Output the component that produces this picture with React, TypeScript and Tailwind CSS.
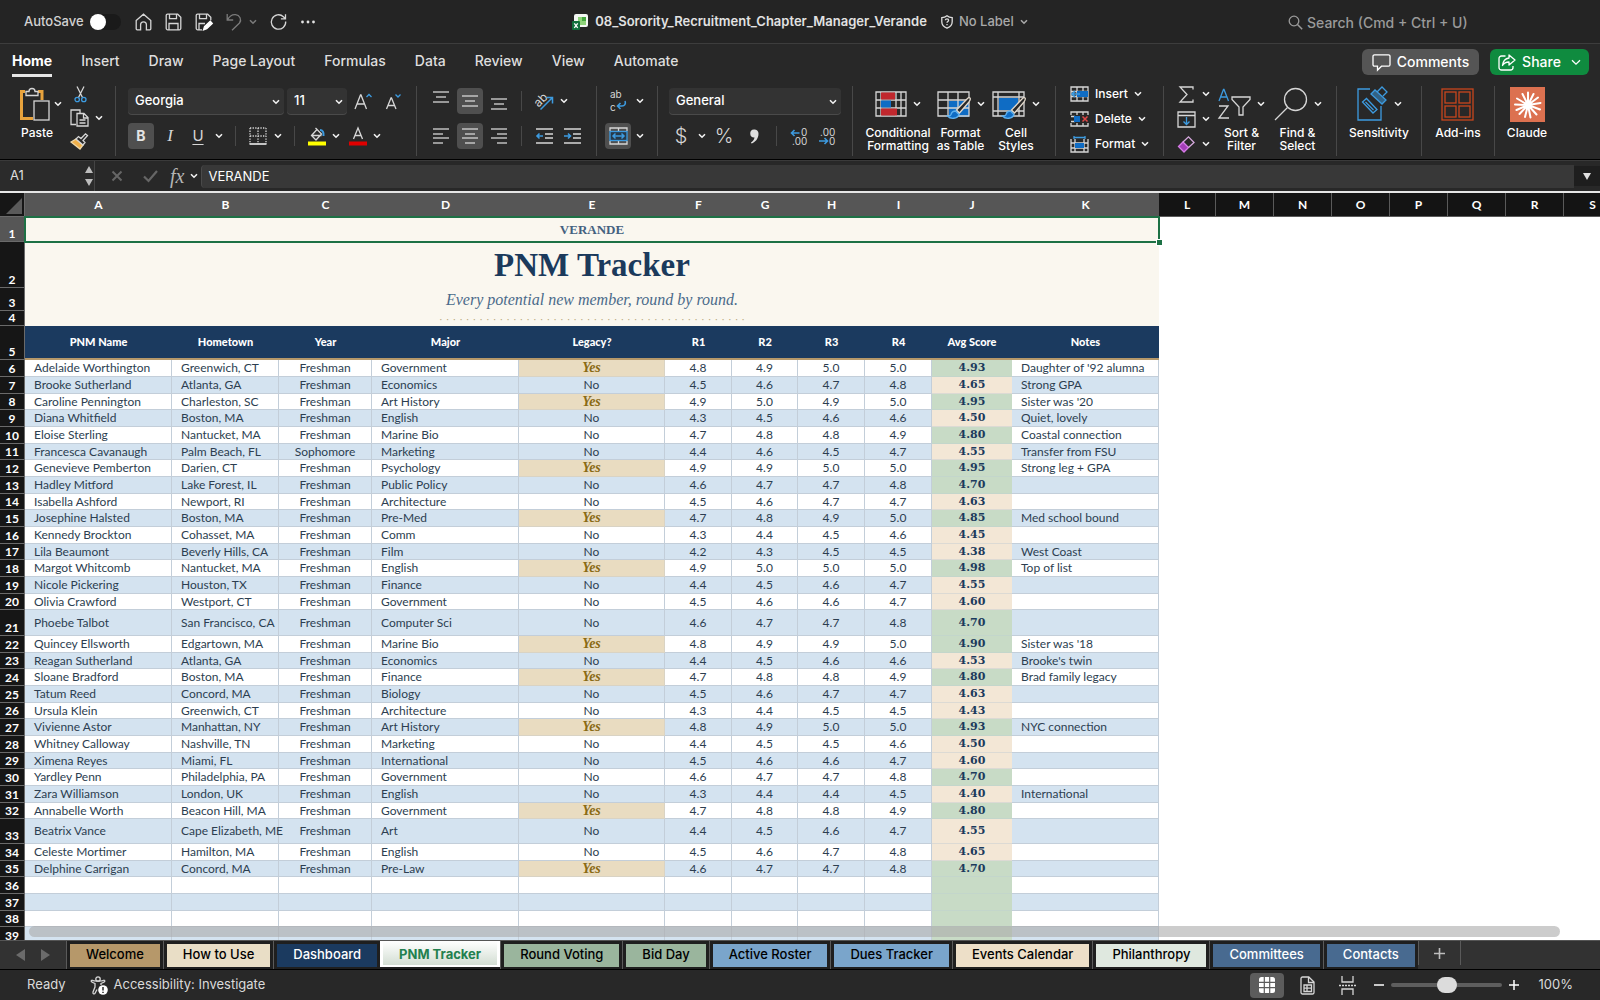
import type { ReactNode } from 'react';
import clsx from 'clsx';

type Member = [string, string, string, string, boolean, string, string, string, string, string, string];

const members: Member[] = [
  ['Adelaide Worthington', 'Greenwich, CT', 'Freshman', 'Government', true, '4.8', '4.9', '5.0', '5.0', '4.93', "Daughter of '92 alumna"],
  ['Brooke Sutherland', 'Atlanta, GA', 'Freshman', 'Economics', false, '4.5', '4.6', '4.7', '4.8', '4.65', 'Strong GPA'],
  ['Caroline Pennington', 'Charleston, SC', 'Freshman', 'Art History', true, '4.9', '5.0', '4.9', '5.0', '4.95', "Sister was '20"],
  ['Diana Whitfield', 'Boston, MA', 'Freshman', 'English', false, '4.3', '4.5', '4.6', '4.6', '4.50', 'Quiet, lovely'],
  ['Eloise Sterling', 'Nantucket, MA', 'Freshman', 'Marine Bio', false, '4.7', '4.8', '4.8', '4.9', '4.80', 'Coastal connection'],
  ['Francesca Cavanaugh', 'Palm Beach, FL', 'Sophomore', 'Marketing', false, '4.4', '4.6', '4.5', '4.7', '4.55', 'Transfer from FSU'],
  ['Genevieve Pemberton', 'Darien, CT', 'Freshman', 'Psychology', true, '4.9', '4.9', '5.0', '5.0', '4.95', 'Strong leg + GPA'],
  ['Hadley Mitford', 'Lake Forest, IL', 'Freshman', 'Public Policy', false, '4.6', '4.7', '4.7', '4.8', '4.70', ''],
  ['Isabella Ashford', 'Newport, RI', 'Freshman', 'Architecture', false, '4.5', '4.6', '4.7', '4.7', '4.63', ''],
  ['Josephine Halsted', 'Boston, MA', 'Freshman', 'Pre-Med', true, '4.7', '4.8', '4.9', '5.0', '4.85', 'Med school bound'],
  ['Kennedy Brockton', 'Cohasset, MA', 'Freshman', 'Comm', false, '4.3', '4.4', '4.5', '4.6', '4.45', ''],
  ['Lila Beaumont', 'Beverly Hills, CA', 'Freshman', 'Film', false, '4.2', '4.3', '4.5', '4.5', '4.38', 'West Coast'],
  ['Margot Whitcomb', 'Nantucket, MA', 'Freshman', 'English', true, '4.9', '5.0', '5.0', '5.0', '4.98', 'Top of list'],
  ['Nicole Pickering', 'Houston, TX', 'Freshman', 'Finance', false, '4.4', '4.5', '4.6', '4.7', '4.55', ''],
  ['Olivia Crawford', 'Westport, CT', 'Freshman', 'Government', false, '4.5', '4.6', '4.6', '4.7', '4.60', ''],
  ['Phoebe Talbot', 'San Francisco, CA', 'Freshman', 'Computer Sci', false, '4.6', '4.7', '4.7', '4.8', '4.70', ''],
  ['Quincey Ellsworth', 'Edgartown, MA', 'Freshman', 'Marine Bio', true, '4.8', '4.9', '4.9', '5.0', '4.90', "Sister was '18"],
  ['Reagan Sutherland', 'Atlanta, GA', 'Freshman', 'Economics', false, '4.4', '4.5', '4.6', '4.6', '4.53', "Brooke's twin"],
  ['Sloane Bradford', 'Boston, MA', 'Freshman', 'Finance', true, '4.7', '4.8', '4.8', '4.9', '4.80', 'Brad family legacy'],
  ['Tatum Reed', 'Concord, MA', 'Freshman', 'Biology', false, '4.5', '4.6', '4.7', '4.7', '4.63', ''],
  ['Ursula Klein', 'Greenwich, CT', 'Freshman', 'Architecture', false, '4.3', '4.4', '4.5', '4.5', '4.43', ''],
  ['Vivienne Astor', 'Manhattan, NY', 'Freshman', 'Art History', true, '4.8', '4.9', '5.0', '5.0', '4.93', 'NYC connection'],
  ['Whitney Calloway', 'Nashville, TN', 'Freshman', 'Marketing', false, '4.4', '4.5', '4.5', '4.6', '4.50', ''],
  ['Ximena Reyes', 'Miami, FL', 'Freshman', 'International', false, '4.5', '4.6', '4.6', '4.7', '4.60', ''],
  ['Yardley Penn', 'Philadelphia, PA', 'Freshman', 'Government', false, '4.6', '4.7', '4.7', '4.8', '4.70', ''],
  ['Zara Williamson', 'London, UK', 'Freshman', 'English', false, '4.3', '4.4', '4.4', '4.5', '4.40', 'International'],
  ['Annabelle Worth', 'Beacon Hill, MA', 'Freshman', 'Government', true, '4.7', '4.8', '4.8', '4.9', '4.80', ''],
  ['Beatrix Vance', 'Cape Elizabeth, ME', 'Freshman', 'Art', false, '4.4', '4.5', '4.6', '4.7', '4.55', ''],
  ['Celeste Mortimer', 'Hamilton, MA', 'Freshman', 'English', false, '4.5', '4.6', '4.7', '4.8', '4.65', ''],
  ['Delphine Carrigan', 'Concord, MA', 'Freshman', 'Pre-Law', true, '4.6', '4.7', '4.7', '4.8', '4.70', ''],
];

const columns = [
  { letter: 'A', title: 'PNM Name', width: 'w-[147px]' },
  { letter: 'B', title: 'Hometown', width: 'w-[107px]' },
  { letter: 'C', title: 'Year', width: 'w-[93px]' },
  { letter: 'D', title: 'Major', width: 'w-[147px]' },
  { letter: 'E', title: 'Legacy?', width: 'w-[146px]' },
  { letter: 'F', title: 'R1', width: 'w-[67px]' },
  { letter: 'G', title: 'R2', width: 'w-[66px]' },
  { letter: 'H', title: 'R3', width: 'w-[67px]' },
  { letter: 'I', title: 'R4', width: 'w-[67px]' },
  { letter: 'J', title: 'Avg Score', width: 'w-[80px]' },
  { letter: 'K', title: 'Notes', width: 'w-[147px]' },
];

const emptyColumns = ['L', 'M', 'N', 'O', 'P', 'Q', 'R', 'S'];

const sheets = [
  { name: 'Welcome', style: 'bg-[#b6986a] text-black' },
  { name: 'How to Use', style: 'bg-[#e9dec6] text-black' },
  { name: 'Dashboard', style: 'bg-[#1b3a5f] text-white' },
  { name: 'PNM Tracker', style: '' },
  { name: 'Round Voting', style: 'bg-[#9ab59d] text-black' },
  { name: 'Bid Day', style: 'bg-[#9ab59d] text-black' },
  { name: 'Active Roster', style: 'bg-[#7aa5cb] text-black' },
  { name: 'Dues Tracker', style: 'bg-[#7aa5cb] text-black' },
  { name: 'Events Calendar', style: 'bg-[#eddfc8] text-black' },
  { name: 'Philanthropy', style: 'bg-[#dfe8df] text-black' },
  { name: 'Committees', style: 'bg-[#486a90] text-white' },
  { name: 'Contacts', style: 'bg-[#486a90] text-white' },
];

function Svg({ w, h, children, className }: { w: number; h: number; children: ReactNode; className?: string }) {
  return (
    <svg
      width={w}
      height={h}
      viewBox={`0 0 ${w} ${h}`}
      fill="none"
      stroke="#d6d6d6"
      strokeWidth="1.3"
      className={clsx('block shrink-0 overflow-visible', className)}
      aria-hidden="true"
    >
      {children}
    </svg>
  );
}

function Chevron({ color = '#f2f2f2', className }: { color?: string; className?: string }) {
  return (
    <Svg w={8} h={6} className={className}>
      <path d="M1 1.2l3 3 3-3" stroke={color} strokeWidth="1.6" />
    </Svg>
  );
}

function IconButton({ label, className, children }: { label: string; className?: string; children: ReactNode }) {
  return (
    <button type="button" aria-label={label} className={clsx('flex h-[26px] shrink-0 items-center justify-center rounded', className)}>
      {children}
    </button>
  );
}

function Divider() {
  return <span className="h-5 w-px shrink-0 bg-[#484848]" />;
}

function Group({ className, children }: { className?: string; children: ReactNode }) {
  return <div className={clsx('flex h-[70px] shrink-0 border-r border-[#484848]', className)}>{children}</div>;
}

function BigButton({ icon, lines, chevron = true, className }: { icon: ReactNode; lines: string[]; chevron?: boolean; className?: string }) {
  return (
    <button type="button" className={clsx('flex shrink-0 flex-col items-center', className)}>
      <span className="flex h-9 items-center gap-1.5">
        {icon}
        {chevron && <Chevron />}
      </span>
      <span className="mt-1 flex flex-col items-center text-xs leading-[13px] font-medium whitespace-nowrap">
        {lines.map((line) => (
          <span key={line}>{line}</span>
        ))}
      </span>
    </button>
  );
}

function TitleBar() {
  return (
    <header className="grid h-11 shrink-0 grid-cols-[1fr_auto_1fr] items-center border-b border-[#3d3d3d] bg-[#242424]">
      <div className="flex items-center pl-6">
        <label className="flex items-center gap-1.5 text-[13px] font-medium text-[#d2d2d2]">
          AutoSave
          <input
            type="checkbox"
            className="h-4 w-[31px] appearance-none rounded-full bg-[#1a1a1a] before:block before:size-4 before:rounded-full before:bg-white"
          />
        </label>
        <div className="flex items-center gap-[13px] pl-3.5">
          <IconButton label="Home">
            <Svg w={17} h={18}>
              <path d="M1.2 7.6L8.5 1.2l7.3 6.4v8.2a1 1 0 0 1-1 1h-3.4v-5a2.9 2.9 0 0 0-5.8 0v5H2.2a1 1 0 0 1-1-1z" />
            </Svg>
          </IconButton>
          <IconButton label="Save">
            <Svg w={17} h={18}>
              <path d="M2.5 1.2h10.2l3.1 3.1v11a1.5 1.5 0 0 1-1.5 1.5H2.7a1.5 1.5 0 0 1-1.5-1.5V2.5a1.3 1.3 0 0 1 1.3-1.3zM4.5 1.2v4.5h7V1.2M4 16.8v-6.3h9v6.3" />
            </Svg>
          </IconButton>
          <IconButton label="Save As">
            <Svg w={18} h={18}>
              <path d="M7 16.8H2.7a1.5 1.5 0 0 1-1.5-1.5V2.5a1.3 1.3 0 0 1 1.3-1.3h10.2l3.1 3.1v3M4.5 1.2v4.5h7V1.2M4 16.8v-6.3h6" />
              <path d="M8.5 17l1-3.5 5.8-5.3 2 2.2-5.6 5.3z" fill="#fff" stroke="#fff" />
            </Svg>
          </IconButton>
          <IconButton label="Undo">
            <Svg w={15} h={18}>
              <path d="M1.2 1v6h6M1.4 7C3.5 3 6.5 1.3 9.5 1.6c4.3.5 6.5 5 4 8.4L6 17.2" stroke="#7b7b7b" />
            </Svg>
            <Chevron color="#7b7b7b" className="ml-2" />
          </IconButton>
          <IconButton label="Redo">
            <Svg w={17} h={18}>
              <path d="M15.7 8.5a7.2 7.2 0 1 1-2.3-4.8l1.8 1.8M15.5 1.2v4.6h-4.6" />
            </Svg>
          </IconButton>
          <IconButton label="More">
            <Svg w={16} h={4}>
              <g fill="#e3e3e3" stroke="none">
                <circle cx="2.5" cy="2" r="1.4" />
                <circle cx="8" cy="2" r="1.4" />
                <circle cx="13.5" cy="2" r="1.4" />
              </g>
            </Svg>
          </IconButton>
        </div>
      </div>
      <div className="flex items-center text-[13px]">
        <Svg w={17} h={16}>
          <g stroke="none">
            <rect x="2" y="0" width="14" height="13" rx="2" fill="#f3f7f3" />
            <rect x="6" y="3" width="8" height="8" fill="#8fd37a" />
            <rect x="10" y="3" width="4" height="4" fill="#45a83f" />
            <rect x="0" y="7" width="8" height="9" rx="1" fill="#12703c" />
          </g>
          <path d="M2.3 9.3l3.4 4.6M5.7 9.3l-3.4 4.6" stroke="#fff" />
        </Svg>
        <h1 className="pl-1.5 font-semibold text-[#e2e2e2]">08_Sorority_Recruitment_Chapter_Manager_Verande</h1>
        <button type="button" className="flex items-center gap-1.5 pl-3.5 font-medium text-[#a9a9a9]">
          <Svg w={12} h={14}>
            <path d="M6 .8c1.5 1.2 3 1.7 5.2 1.8v4.2c0 3-1.9 5.2-5.2 6.400C2.700 12 .8 9.800.8 6.800V2.600C3 2.500 4.500 2 6 .8z" stroke="#dedede" />
            <path d="M4.4 5.3c0-2 3.2-2 3.2 0 0 1.2-1.6 1.2-1.6 2.5M6 9v1.2" stroke="#dedede" />
          </Svg>
          No Label
          <Chevron color="#a9a9a9" />
        </button>
      </div>
      <label className="flex items-center justify-end gap-1 pt-0.5 pr-[117px]">
        <Svg w={15} h={15}>
          <circle cx="6" cy="6" r="4.8" stroke="#9a9a9a" />
          <path d="M9.5 9.5l4.7 4.7" stroke="#9a9a9a" strokeWidth="1.5" />
        </Svg>
        <input
          type="text"
          aria-label="Search"
          placeholder="Search (Cmd + Ctrl + U)"
          className="w-44 bg-transparent text-sm font-medium outline-none placeholder:text-[#9a9a9a]"
        />
      </label>
    </header>
  );
}

function RibbonTabs() {
  const tabs = ['Insert', 'Draw', 'Page Layout', 'Formulas', 'Data', 'Review', 'View', 'Automate'];
  return (
    <div className="flex h-9 shrink-0 items-center justify-between pr-[11px] pl-3">
      <nav className="flex gap-[29px] text-sm leading-[26px] font-medium text-[#dedede]">
        <a href="#home" className="border-b-[3px] border-[#e6e6e6] font-bold text-white">
          Home
        </a>
        {tabs.map((tab) => (
          <a key={tab} href="#ribbon">
            {tab}
          </a>
        ))}
      </nav>
      <div className="flex gap-[11px] text-sm font-medium">
        <button type="button" className="flex h-[26px] w-[117px] items-center justify-center gap-1.5 rounded-md bg-[#555] text-white">
          <Svg w={19} h={17}>
            <path d="M2.5.8h14a1.500 1.500 0 0 1 1.500 1.500v8.400a1.500 1.500 0 0 1-1.500 1.500H9.500l-4 4v-4h-3A1.500 1.500 0 0 1 1 10.700V2.300A1.500 1.500 0 0 1 2.500.8z" stroke="#fff" />
          </Svg>
          Comments
        </button>
        <button type="button" className="flex h-[26px] w-[99px] items-center justify-center gap-1.5 rounded-md bg-[#0f8b3f] text-white">
          <Svg w={18} h={17}>
            <path d="M7.5 2H3.5A2.5 2.5 0 0 0 1 4.5v9A2.5 2.5 0 0 0 3.5 16h9a2.5 2.5 0 0 0 2.5-2.5V12" stroke="#fff" />
            <path d="M11 1l6 5-6 5V8C8 8 6 9 4.5 11.5 5 7 7.5 4.5 11 4z" stroke="#fff" strokeLinejoin="round" />
          </Svg>
          Share
          <Svg w={10} h={7} className="ml-1">
            <path d="M1 1.2l4 4 4-4" stroke="#fff" />
          </Svg>
        </button>
      </div>
    </div>
  );
}

function PickList({ label, value, className }: { label: string; value: string; className: string }) {
  return (
    <div className={clsx('relative shrink-0', className)}>
      <select
        aria-label={label}
        defaultValue={value}
        className="block h-[26px] w-full appearance-none rounded bg-[#333] px-[7px] text-[13px] font-medium text-white shadow-[0_1px_0_#4a4a4a]"
      >
        <option>{value}</option>
      </select>
      <Chevron className="pointer-events-none absolute top-[11px] right-1" />
    </div>
  );
}

function Lines({ rows, h = 16 }: { rows: [number, number, number][]; h?: number }) {
  return (
    <Svg w={16} h={h}>
      {rows.map(([y, x1, x2]) => (
        <path key={y} d={`M${x1} ${y}H${x2}`} />
      ))}
    </Svg>
  );
}

function ClipboardGroup() {
  return (
    <Group className="w-[116px] pl-[18px]">
      <button type="button" className="flex flex-col items-center">
        <span className="flex h-9 items-center gap-1">
          <Svg w={32} h={34}>
            <path d="M7 4.5H3.500v27H15M20 4.500h4V13" stroke="#e8a33d" strokeWidth="3" />
            <path d="M8 8.5V4.500h3a3 3 0 0 1 6 0h3v4z" fill="#282828" />
            <rect x="16" y="14" width="15" height="19" fill="#282828" />
          </Svg>
          <Chevron />
        </span>
        <span className="mt-1 pr-1.5 text-xs leading-[13px] font-medium">Paste</span>
      </button>
      <div className="flex flex-col items-start gap-1.5 pl-2">
        <button type="button" aria-label="Cut" className="pl-1">
          <Svg w={13} h={17}>
            <path d="M3 .5l5.5 11M10 .5L4.5 11.5" />
            <circle cx="3.2" cy="13.5" r="2.2" stroke="#3d9be0" />
            <circle cx="9.8" cy="13.5" r="2.2" stroke="#3d9be0" />
          </Svg>
        </button>
        <button type="button" aria-label="Copy" className="flex items-center gap-1.5">
          <Svg w={19} h={18}>
            <path d="M6 15.5H1V1h9v3M7 4.5h7l4 4v8.5H7zM13.5 4.5v4.5H18M9.5 11h6M9.5 14h6" />
          </Svg>
          <Chevron />
        </button>
        <button type="button" aria-label="Format Painter">
          <Svg w={20} h={17}>
            <path d="M1 9l9 7 3-4-7-6z" fill="#f0b04a" stroke="#f0d9a8" />
            <path d="M6 6l7 6 2-2.5-2-2 4.5-5-2-1.7L11 5.5 8.5 3.5z" fill="#282828" />
          </Svg>
        </button>
      </div>
    </Group>
  );
}

function FontGroup() {
  return (
    <Group className="w-[301px] flex-col justify-between pt-0.5 pb-[7px] pl-3">
      <div className="flex items-center">
        <PickList label="Font" value="Georgia" className="w-[156px]" />
        <PickList label="Font size" value="11" className="ml-[3px] w-[60px]" />
        <IconButton label="Increase font size" className="ml-1 w-6">
          <Svg w={18} h={18}>
            <path d="M1 17L6.5 3h.5l5.5 14M3 12h7.5" />
            <path d="M12.5 5l2.5-2.5L17.5 5" stroke="#3d9be0" />
          </Svg>
        </IconButton>
        <IconButton label="Decrease font size" className="ml-1.5 w-6">
          <Svg w={17} h={18}>
            <path d="M1.5 17L6 6h.5L11 17M3 13.5h6.5" />
            <path d="M10.5 2.5L13 5l2.5-2.5" stroke="#3d9be0" />
          </Svg>
        </IconButton>
      </div>
      <div className="flex items-center">
        <IconButton label="Bold" className="w-[26px] bg-[#4f4f4f] text-sm font-bold text-[#e4e4e4]">
          B
        </IconButton>
        <IconButton label="Italic" className="ml-1 w-6 font-['Liberation_Serif',serif] text-[17px] text-[#d6d6d6] italic">
          I
        </IconButton>
        <IconButton label="Underline" className="ml-1 w-6 text-[15px] text-[#d6d6d6] underline underline-offset-3">
          U
        </IconButton>
        <Chevron className="mr-3 ml-[5px]" />
        <Divider />
        <IconButton label="Borders" className="ml-3 w-5">
          <Svg w={18} h={18}>
            <path d="M1 1h16M1 9h16M1 1v16M9 1v16M17 1v16" strokeDasharray="1.3 1.3" />
            <path d="M.5 17h17" strokeWidth="1.8" />
          </Svg>
        </IconButton>
        <Chevron className="mr-3 ml-1.5" />
        <Divider />
        <IconButton label="Fill color" className="ml-3 w-5">
          <Svg w={18} h={20}>
            <path d="M3.5 9.5L9 3.5l4.5 4.5-5.5 6zM9 3.5L7.5 2M3.5 9.5h10" />
            <path d="M12 4c2.5 0 4 2 3.5 6" stroke="#3d9be0" strokeWidth="2" />
            <path d="M0 17.5h18" stroke="#ff0" strokeWidth="4" />
          </Svg>
        </IconButton>
        <Chevron className="ml-[5px]" />
        <IconButton label="Font color" className="ml-2 w-5">
          <Svg w={18} h={20}>
            <path d="M4.5 13L9 2l4.5 11M6 9.5h6" />
            <path d="M0 17.5h18" stroke="#e00000" strokeWidth="4" />
          </Svg>
        </IconButton>
        <Chevron className="ml-[5px]" />
      </div>
    </Group>
  );
}

function AlignmentGroup() {
  return (
    <Group className="w-[180px] flex-col justify-between pt-0.5 pb-[7px] pl-3">
      <div className="flex items-center">
        <IconButton label="Top align" className="w-6">
          <Lines rows={[[1, 0, 16], [6, 3, 13], [11, 0, 16]]} h={20} />
        </IconButton>
        <IconButton label="Middle align" className="ml-1 w-[26px] bg-[#4f4f4f]">
          <Lines rows={[[3, 0, 16], [8, 3, 13], [13, 0, 16]]} />
        </IconButton>
        <IconButton label="Bottom align" className="ml-1 w-6">
          <Lines rows={[[8, 0, 16], [13, 3, 13], [18, 0, 16]]} h={20} />
        </IconButton>
        <span className="w-2.5" />
        <Divider />
        <IconButton label="Orientation" className="ml-3 w-5">
          <Svg w={20} h={19}>
            <text x="1" y="13" fontSize="12" fill="#d6d6d6" stroke="none" transform="rotate(-45 6 10)">
              ab
            </text>
            <path d="M6.5 17.5L18 6M12.5 5.5h6v6" stroke="#3d9be0" strokeWidth="1.5" />
          </Svg>
        </IconButton>
        <Chevron className="ml-1.5" />
      </div>
      <div className="flex items-center">
        <IconButton label="Align left" className="w-6">
          <Lines rows={[[1, 0, 16], [6, 0, 10], [10, 0, 16], [15, 0, 10]]} />
        </IconButton>
        <IconButton label="Center" className="ml-1 w-[26px] bg-[#4f4f4f]">
          <Lines rows={[[1, 0, 16], [6, 3, 13], [10, 0, 16], [15, 3, 13]]} />
        </IconButton>
        <IconButton label="Align right" className="ml-1 w-6">
          <Lines rows={[[1, 0, 16], [6, 6, 16], [10, 0, 16], [15, 6, 16]]} />
        </IconButton>
        <span className="w-2.5" />
        <Divider />
        <IconButton label="Decrease indent" className="ml-3 w-5">
          <Svg w={17} h={16}>
            <path d="M0 1h17M9 6h8M9 10h8M0 15h17" />
            <path d="M7 8H1M3.5 5.5L1 8l2.5 2.5" stroke="#3d9be0" strokeWidth="1.6" />
          </Svg>
        </IconButton>
        <IconButton label="Increase indent" className="ml-2 w-5">
          <Svg w={17} h={16}>
            <path d="M0 1h17M9 6h8M9 10h8M0 15h17" />
            <path d="M0 8h6.5M4 5.5L6.5 8 4 10.5" stroke="#3d9be0" strokeWidth="1.6" />
          </Svg>
        </IconButton>
      </div>
    </Group>
  );
}

function WrapGroup() {
  return (
    <Group className="w-[61px] flex-col justify-between pt-0.5 pb-[7px] pl-2">
      <div className="flex items-center">
        <IconButton label="Wrap text" className="w-[26px]">
          <Svg w={18} h={22}>
            <g fontSize="10" fill="#d6d6d6" stroke="none">
              <text x="1" y="8">
                ab
              </text>
              <text x="1" y="21">
                c
              </text>
            </g>
            <path d="M16 11c1.2 3-.5 5-3 5H8.5M11.5 13l-3 3 3 3" stroke="#3d9be0" strokeWidth="1.6" />
          </Svg>
        </IconButton>
        <Chevron className="ml-[5px]" />
      </div>
      <div className="flex items-center">
        <IconButton label="Merge and center" className="w-[26px] bg-[#4f4f4f]">
          <Svg w={19} h={18}>
            <path d="M1 4V1h17v3M1 14v3h17v-3M9.5 1v3M9.5 14v3" />
            <rect x="1" y="4.5" width="17" height="9" stroke="#3d9be0" fill="#263a4a" />
            <path d="M4 9h11M6.5 6.5L4 9l2.5 2.5M12.5 6.5L15 9l-2.5 2.5" stroke="#3d9be0" strokeWidth="1.5" />
          </Svg>
        </IconButton>
        <Chevron className="ml-[5px]" />
      </div>
    </Group>
  );
}

function NumberGroup() {
  return (
    <Group className="w-[195px] flex-col justify-between pt-0.5 pb-[7px] pl-[11px]">
      <PickList label="Number format" value="General" className="w-[172px]" />
      <div className="flex items-center text-[#d6d6d6]">
        <IconButton label="Currency" className="w-6 text-xl font-light">
          $
        </IconButton>
        <Chevron className="ml-[5px]" />
        <IconButton label="Percent" className="ml-1.5 w-6 text-xl font-light">
          %
        </IconButton>
        <IconButton label="Comma style" className="ml-1.5 w-6">
          <Svg w={11} h={15}>
            <path d="M5 .5a4 4 0 0 1 4.5 4.2C9.5 9.5 6.5 13 2.5 14.5l-.5-1c2-1.2 3.2-2.8 3.500-5A4 4 0 1 1 5 .5z" fill="#e0e0e0" stroke="none" />
          </Svg>
        </IconButton>
        <span className="w-2.5" />
        <Divider />
        <IconButton label="Increase decimal" className="ml-3 w-5">
          <Svg w={19} h={19}>
            <g fontSize="10" fill="#d6d6d6" stroke="none">
              <text x="11" y="9">
                0
              </text>
              <text x="2" y="18">
                .00
              </text>
            </g>
            <path d="M9.5 6H1.5M4.5 3L1.5 6l3 3" stroke="#3d9be0" strokeWidth="1.6" />
          </Svg>
        </IconButton>
        <IconButton label="Decrease decimal" className="ml-2 w-5">
          <Svg w={19} h={19}>
            <g fontSize="10" fill="#d6d6d6" stroke="none">
              <text x="2" y="9">
                .00
              </text>
              <text x="11" y="18">
                0
              </text>
            </g>
            <path d="M1 14h8M6.5 11l3 3-3 3" stroke="#3d9be0" strokeWidth="1.6" />
          </Svg>
        </IconButton>
      </div>
    </Group>
  );
}

function Brush() {
  return (
    <>
      <path d="M33 9c-1-.8-2 0-3 1L19.5 21l3 3L32 13c1-1.5 2-3 1-4z" fill="#282828" stroke="#e3d9cc" />
      <path d="M18.5 22c-3 0-4 1.5-4.5 3.5-.5 1.3-2 1.7-3.5 1.5 3 3.5 10 3 11.5-1.5z" fill="#0f6cc4" stroke="#5db0ee" />
    </>
  );
}

function StylesGroup() {
  return (
    <Group className="w-[203px] pl-[11px]">
      <BigButton
        className="w-[68px]"
        lines={['Conditional', 'Formatting']}
        icon={
          <Svg w={32} h={26}>
            <path d="M1 1h30v24H1zM1 9h30M1 17h30M6 1v24M21 1v24M26 1v24" />
            <path d="M6 1.5h14v7H6zM6 17.5h16v7H6z" fill="#c0272d" stroke="none" />
            <path d="M6 9.5h10v7H6z" fill="#0f6cc4" stroke="none" />
          </Svg>
        }
      />
      <BigButton
        className="w-[57px]"
        lines={['Format', 'as Table']}
        icon={
          <Svg w={34} h={31}>
            <path d="M12 12h20v16H12z" fill="#0f6cc4" stroke="none" />
            <path d="M1 3h31v24H1zM1 11h31M1 19h31M11 3v24M21 3v24" />
            <Brush />
          </Svg>
        }
      />
      <BigButton
        className="w-[54px]"
        lines={['Cell', 'Styles']}
        icon={
          <Svg w={34} h={31}>
            <path d="M1 3h31v24H1zM1 8h31M1 22h31M6 3v24M27 3v24" />
            <path d="M7 9h19v12H7z" fill="#0f6cc4" stroke="none" />
            <Brush />
          </Svg>
        }
      />
    </Group>
  );
}

function CellsGroup() {
  const items: [string, ReactNode][] = [
    [
      'Insert',
      <>
        <path d="M1 1h17v14H1zM1 5.5h17M1 10.5h17M7 1v14M13 1v14" />
        <path d="M7 5h11v6H7z" fill="#0f6cc4" stroke="none" />
        <path d="M10 8H2M5 5L2 8l3 3" stroke="#3d9be0" strokeWidth="1.6" />
      </>,
    ],
    [
      'Delete',
      <>
        <path d="M1 4V1h17v3M1 12v3h17v-3M7 1v3M13 1v3M7 12v3M13 12v3M1 5.5h4M1 10.5h4" />
        <path d="M4 5h6v6H4z" fill="#0f6cc4" stroke="none" />
        <path d="M12.5 5.5l5 5M17.5 5.5l-5 5" stroke="#e04848" strokeWidth="1.5" />
      </>,
    ],
    [
      'Format',
      <>
        <path d="M1 3v13h17V3M1 7h17M1 12h17M5 3v13M14 3v13" />
        <path d="M5 7h9v5H5z" fill="#0f6cc4" stroke="none" />
        <path d="M4 1.5h11M4 0v3M15 0v3" stroke="#3d9be0" />
      </>,
    ],
  ];
  return (
    <Group className="w-[108px] flex-col gap-[9px] pl-3.5">
      {items.map(([name, icon]) => (
        <button key={name} type="button" className="flex h-4 items-center gap-1.5 text-xs font-medium">
          <Svg w={19} h={17}>
            {icon}
          </Svg>
          {name}
          <Chevron />
        </button>
      ))}
    </Group>
  );
}

function EditingGroup() {
  return (
    <Group className="w-[173px] pl-[13px]">
      <div className="flex w-9 flex-col gap-[9px]">
        <button type="button" aria-label="AutoSum" className="flex h-4 items-center gap-1.5">
          <Svg w={19} h={17}>
            <path d="M16 3.5V1H3l7 7.5L3 16h13v-2.5" />
          </Svg>
          <Chevron />
        </button>
        <button type="button" aria-label="Fill" className="flex h-4 items-center gap-1.5">
          <Svg w={19} h={17}>
            <path d="M1 1h17v15H1zM1 4.5h17" />
            <path d="M9.5 6v7.5M6.5 10.5l3 3 3-3" stroke="#3d9be0" />
          </Svg>
          <Chevron />
        </button>
        <button type="button" aria-label="Clear" className="flex h-4 items-center gap-1.5">
          <Svg w={19} h={17}>
            <path d="M1.5 10.5L6 6l5.500 5.500L7 16z" fill="#a33fb8" stroke="#d77be8" />
            <path d="M6 6l5.5-5.2L17 6.5l-5.5 5" stroke="#d6a9de" />
          </Svg>
          <Chevron />
        </button>
      </div>
      <BigButton
        className="w-[57px]"
        lines={['Sort &', 'Filter']}
        icon={
          <Svg w={33} h={32}>
            <path d="M1 13L5.5 1.5h.5L10.5 13M2.5 9h7" stroke="#3d9be0" />
            <path d="M1 18h9L1 30h10" />
            <path d="M14 9h18v2.5l-7 7.5v8h-4v-8l-7-7.5z" />
          </Svg>
        }
      />
      <BigButton
        className="w-[55px]"
        lines={['Find &', 'Select']}
        icon={
          <Svg w={34} h={34}>
            <circle cx="21.5" cy="12.5" r="11" />
            <path d="M13.5 20.5L1 33" />
          </Svg>
        }
      />
    </Group>
  );
}

function Ribbon() {
  return (
    <div className="flex h-20 shrink-0 overflow-hidden border-b border-black pt-1.5 text-white">
      <ClipboardGroup />
      <FontGroup />
      <AlignmentGroup />
      <WrapGroup />
      <NumberGroup />
      <StylesGroup />
      <CellsGroup />
      <EditingGroup />
      <Group className="w-[85px] justify-center">
        <BigButton
          lines={['Sensitivity']}
          icon={
            <Svg w={32} h={34}>
              <path d="M14 2H2v31h23V19" stroke="#3d9be0" />
              <path d="M15 7l4-4 11 10-4 4zM21 5l5-5 5 5-4 4M6.5 15l4-3.5 10.5 11-4 3.5z" stroke="#3d9be0" />
              <path d="M15 7l4-4 11 10-4 4z" fill="#3d9be0" fillOpacity="0.5" stroke="none" />
              <path d="M9.5 15l8 8" stroke="#3d9be0" />
            </Svg>
          }
        />
      </Group>
      <Group className="w-[73px] justify-center">
        <BigButton
          chevron={false}
          lines={['Add-ins']}
          icon={
            <Svg w={33} h={33}>
              <g stroke="#c8461d">
                <rect x="1" y="1" width="31" height="31" />
                <rect x="4" y="4" width="11" height="11" />
                <rect x="18" y="4" width="11" height="11" />
                <rect x="4" y="18" width="11" height="11" />
                <rect x="18" y="18" width="11" height="11" />
              </g>
            </Svg>
          }
        />
      </Group>
      <BigButton
        chevron={false}
        className="w-16"
        lines={['Claude']}
        icon={
          <Svg w={35} h={35}>
            <rect width="35" height="35" fill="#dc7150" stroke="none" />
            <path
              d="M18 18V5.5M18 18l5.5-11M18 18l10-7.5M18 18l12.5-2M18 18l12 4.5M18 18l8.5 9.5M18 18l2.5 12.5M18 18l-3 12M18 18l-8.5 9M18 18L6.500 23M18 18l-13-.5M18 18L7 11.500M18 18L12.500 7"
              stroke="#fff"
              strokeWidth="2"
              strokeLinecap="round"
            />
          </Svg>
        }
      />
    </div>
  );
}

function FormulaBar() {
  return (
    <div className="flex h-[31px] shrink-0 items-center border-t border-[#3a3a3a]">
      <div className="flex h-full w-[95px] items-center border-r border-[#444] bg-[#2b2b2b] pl-2.5">
        <input aria-label="Name box" defaultValue="A1" className="w-[75px] bg-transparent text-[13px] text-[#dedede] outline-none" />
        <Svg w={8} h={20}>
          <path d="M4 0l4 7H0zM4 20l4-7H0z" fill="#bdbdbd" stroke="none" />
        </Svg>
      </div>
      <button type="button" aria-label="Cancel" className="ml-4">
        <Svg w={12} h={12}>
          <path d="M1.5 1.5l9 9M10.5 1.5l-9 9" stroke="#666" strokeWidth="2" />
        </Svg>
      </button>
      <button type="button" aria-label="Enter" className="ml-5">
        <Svg w={15} h={12}>
          <path d="M1 6.5l4.5 4.5L14 1" stroke="#666" strokeWidth="2.2" />
        </Svg>
      </button>
      <button type="button" className="ml-3 flex items-center gap-1.5 font-['Liberation_Serif',serif] text-xl leading-5 text-[#b5b5b5] italic">
        fx
        <Chevron />
      </button>
      <input
        aria-label="Formula"
        defaultValue="VERANDE"
        className="ml-[3px] h-[23px] min-w-0 flex-1 rounded-l border-l border-[#4a4a4a] bg-[#383838] px-1.5 text-[13px] text-white outline-none"
      />
      <button type="button" aria-label="Expand formula bar" className="flex h-5 w-[26px] items-center justify-center bg-[#1e1e1e]">
        <Svg w={8} h={7}>
          <path d="M0 0h8L4 7z" fill="#e0e0e0" stroke="none" />
        </Svg>
      </button>
    </div>
  );
}

function RowNumber({ n, selected }: { n: number; selected?: boolean }) {
  return (
    <th
      scope="row"
      className={clsx(
        'border-r border-b border-[#6a6a6a] p-0 text-center align-bottom text-xs leading-[14px] font-bold text-white',
        selected ? 'bg-[#565656]' : 'bg-[#161616]',
      )}
    >
      {n}
    </th>
  );
}

function MemberRow({ n, member }: { n: number; member?: Member }) {
  const banded = n % 2 === 1;
  const tall = n === 21 || n === 33;
  const cell = clsx('border-r border-b border-[#c3ced9] p-0 whitespace-nowrap', banded ? 'bg-[#d4e3f0]' : 'bg-white');
  const text = clsx(cell, 'pl-[9px] text-left');
  const score = clsx(cell, 'text-center');
  const legacy = member?.[4];
  const high = !member || Number(member[9]) >= 4.7;
  return (
    <tr className={n === 21 ? 'h-[26px]' : tall ? 'h-[25px]' : n % 3 === 2 ? 'h-4' : 'h-[17px]'}>
      <RowNumber n={n} />
      <td className={text}>{member?.[0]}</td>
      <td className={text}>{member?.[1]}</td>
      <td className={score}>{member?.[2]}</td>
      <td className={text}>{member?.[3]}</td>
      {legacy ? (
        <td className="border-r border-b border-[#d9d3c4] bg-[#e9dcc1] p-0 text-center font-['Liberation_Serif',serif] text-sm leading-[14px] font-bold text-[#8a6a14] italic">
          Yes
        </td>
      ) : (
        <td className={score}>{member && 'No'}</td>
      )}
      <td className={score}>{member?.[5]}</td>
      <td className={score}>{member?.[6]}</td>
      <td className={score}>{member?.[7]}</td>
      <td className={score}>{member?.[8]}</td>
      <td
        className={clsx(
          "border-b p-0 text-center font-['DejaVu_Serif',serif] text-[11px] font-bold text-[#1b3a5c]",
          high ? 'border-[#c3d6cb] bg-[#c8dbc6]' : 'border-[#dcdad4] bg-[#f3e7d6]',
        )}
      >
        {member?.[9]}
      </td>
      <td className={text}>{member?.[10]}</td>
    </tr>
  );
}

function Sheet() {
  return (
    <main className="relative min-h-0 flex-1 overflow-hidden border-t-2 border-[#e6e6e6] bg-white">
      <table className="w-[1622px] table-fixed border-separate border-spacing-0 font-[Lato,sans-serif] text-xs leading-[14px] text-[#2c3e50]">
        <colgroup>
          <col className="w-[25px]" />
          {columns.map((c) => (
            <col key={c.letter} className={c.width} />
          ))}
          {emptyColumns.map((l) => (
            <col key={l} className={l === 'L' ? 'w-[57px]' : 'w-[58px]'} />
          ))}
        </colgroup>
        <thead>
          <tr className="h-6 text-white">
            <th aria-label="Select all" className="border-r border-b border-[#6a6a6a] bg-[#161616] p-0">
              <Svg w={24} h={23}>
                <path d="M22 5v16H6z" fill="#5a5a5a" stroke="none" />
              </Svg>
            </th>
            {columns.map((c) => (
              <th key={c.letter} scope="col" className="bg-[#565656] p-0 text-xs font-bold">
                {c.letter}
              </th>
            ))}
            {emptyColumns.map((l) => (
              <th key={l} scope="col" className="border-r border-b border-[#5a5a5a] bg-[#141414] p-0 text-xs font-bold">
                {l}
              </th>
            ))}
          </tr>
        </thead>
        <tbody>
          <tr className="h-[25px]">
            <RowNumber n={1} selected />
            <td
              colSpan={11}
              className="relative bg-[#faf7ef] p-0 text-center font-['Liberation_Serif',serif] text-[13px] font-bold text-[#44617f]"
            >
              VERANDE
              <span className="absolute -inset-px border-2 border-[#1d7145]" />
              <span className="absolute -right-1 -bottom-1 size-[7px] border border-white bg-[#1d7145]" />
            </td>
          </tr>
          <tr className="h-[46px]">
            <RowNumber n={2} />
            <td colSpan={11} className="bg-[#faf7ef] p-0 text-center font-['Liberation_Serif',serif] text-[33px] leading-9 font-bold text-[#1b3a5c]">
              PNM Tracker
            </td>
          </tr>
          <tr className="h-[23px]">
            <RowNumber n={3} />
            <td colSpan={11} className="bg-[#faf7ef] p-0 text-center font-['Liberation_Serif',serif] text-base leading-5 text-[#4a6a8a] italic">
              Every potential new member, round by round.
            </td>
          </tr>
          <tr className="h-[15px]">
            <RowNumber n={4} />
            <td colSpan={11} className="bg-[#faf7ef] p-0 text-center font-['Liberation_Sans',sans-serif] text-[11px] leading-3 text-[#b9a87c]">
              {Array.from({ length: 46 }, () => '·').join(' ')}
            </td>
          </tr>
          <tr className="h-[34px]">
            <RowNumber n={5} />
            {columns.map((c) => (
              <th key={c.letter} scope="col" className="border-b-2 border-[#b6986a] bg-[#1b3a5f] p-0 text-center text-[11px] font-black text-white">
                {c.title}
              </th>
            ))}
          </tr>
          {members.map((m, i) => (
            <MemberRow key={m[0]} n={i + 6} member={m} />
          ))}
          {[36, 37, 38, 39].map((n) => (
            <MemberRow key={n} n={n} />
          ))}
        </tbody>
      </table>
      <div className="absolute right-10 bottom-[3px] left-[29px] h-[11px] rounded-full bg-[#aaa]/60" />
    </main>
  );
}

function SheetTabs() {
  return (
    <nav className="flex h-[30px] shrink-0 items-start border-t border-b border-t-[#555] border-b-black bg-[#323232]">
      <button type="button" aria-label="Previous sheet" className="ml-4 flex h-7 items-center">
        <Svg w={9} h={12}>
          <path d="M9 0v12L0 6z" fill="#6b6b6b" stroke="none" />
        </Svg>
      </button>
      <button type="button" aria-label="Next sheet" className="ml-4 flex h-7 items-center">
        <Svg w={9} h={12}>
          <path d="M0 0v12l9-6z" fill="#6b6b6b" stroke="none" />
        </Svg>
      </button>
      <div className="ml-4 flex h-7 items-start bg-[#1f1f1f] text-[13px] font-medium">
        {sheets.map((s) =>
          s.style ? (
            <div key={s.name} className="flex h-7 items-center border-l border-[#5a5a5a] px-[3px]">
              <button type="button" className={clsx('h-[23px] px-4 whitespace-nowrap', s.style)}>
                {s.name}
              </button>
            </div>
          ) : (
            <button
              key={s.name}
              type="button"
              className="h-[26px] border-x-[3px] border-b-2 border-white bg-linear-to-b from-white to-[#d3ded3] px-4 pt-1 font-bold whitespace-nowrap text-[#23804f]"
            >
              {s.name}
            </button>
          ),
        )}
      </div>
      <button type="button" aria-label="Add sheet" className="flex h-6 w-[43px] items-center justify-center border-x border-[#5a5a5a]">
        <Svg w={11} h={11}>
          <path d="M5.5 0v11M0 5.5h11" stroke="#bdbdbd" strokeWidth="1.6" />
        </Svg>
      </button>
    </nav>
  );
}

function StatusBar() {
  return (
    <footer className="flex h-[30px] shrink-0 items-center px-[27px] text-[13px] text-[#dadada]">
      <span>Ready</span>
      <button type="button" className="ml-6 flex items-center gap-1.5">
        <Svg w={18} h={19}>
          <circle cx="8" cy="3" r="2.2" />
          <path d="M1.5 4c-1 1.500 0 2 3.500 3.500v3.500L3 16c-.5 2 1.500 2.500 2.200 1L7 13.500M14.500 4c1 1.500 0 2-3.500 3.500V9M1.500 4C4 5.500 12 5.500 14.500 4" />
          <circle cx="13" cy="14" r="4.8" fill="#fff" stroke="none" />
          <path d="M13 11v3.5M13 15.7V17" stroke="#282828" strokeWidth="1.5" />
        </Svg>
        Accessibility: Investigate
      </button>
      <div className="ml-auto flex items-center">
        <button type="button" aria-label="Normal view" className="flex h-[25px] w-[34px] items-center justify-center rounded bg-[#5c5c5c]">
          <Svg w={16} h={16}>
            <rect width="16" height="16" rx="2.5" fill="#fff" stroke="none" />
            <path d="M5.3 0v16M10.7 0v16M0 5.3h16M0 10.7h16" stroke="#5c5c5c" strokeWidth="1.2" />
          </Svg>
        </button>
        <button type="button" aria-label="Page layout view" className="ml-4">
          <Svg w={15} h={19}>
            <path d="M2.5 1h6.3L14 6v10.5A1.5 1.5 0 0 1 12.5 18h-10A1.5 1.5 0 0 1 1 16.5v-14A1.5 1.5 0 0 1 2.500 1zM8.500 1v5.500H14M4 9h7.500v6.500H4zM4 12.200h7.500M7 9v6.500" />
          </Svg>
        </button>
        <button type="button" aria-label="Page break preview" className="ml-6">
          <Svg w={17} h={19}>
            <path d="M3 0v6h11V0M3 19v-6h11v6" />
            <path d="M0 9.5h17" strokeDasharray="2 1" />
          </Svg>
        </button>
        <button type="button" aria-label="Zoom out" className="ml-[18px]">
          <Svg w={10} h={10}>
            <path d="M0 5h10" stroke="#fff" strokeWidth="1.5" />
          </Svg>
        </button>
        <input
          type="range"
          aria-label="Zoom"
          min={0}
          max={100}
          defaultValue={50}
          className="mx-[7px] h-1 w-[111px] appearance-none rounded-full bg-[#5e5e5e] [&::-webkit-slider-thumb]:h-4 [&::-webkit-slider-thumb]:w-5 [&::-webkit-slider-thumb]:appearance-none [&::-webkit-slider-thumb]:rounded-full [&::-webkit-slider-thumb]:bg-[#dcdcdc]"
        />
        <button type="button" aria-label="Zoom in">
          <Svg w={10} h={10}>
            <path d="M0 5h10M5 0v10" stroke="#fff" strokeWidth="1.5" />
          </Svg>
        </button>
        <output className="ml-[18px] w-9 text-right">100%</output>
      </div>
    </footer>
  );
}

export default function App() {
  return (
    <div className="flex h-screen flex-col overflow-hidden bg-[#282828] font-[Inter,sans-serif]">
      <TitleBar />
      <RibbonTabs />
      <Ribbon />
      <FormulaBar />
      <Sheet />
      <SheetTabs />
      <StatusBar />
    </div>
  );
}
